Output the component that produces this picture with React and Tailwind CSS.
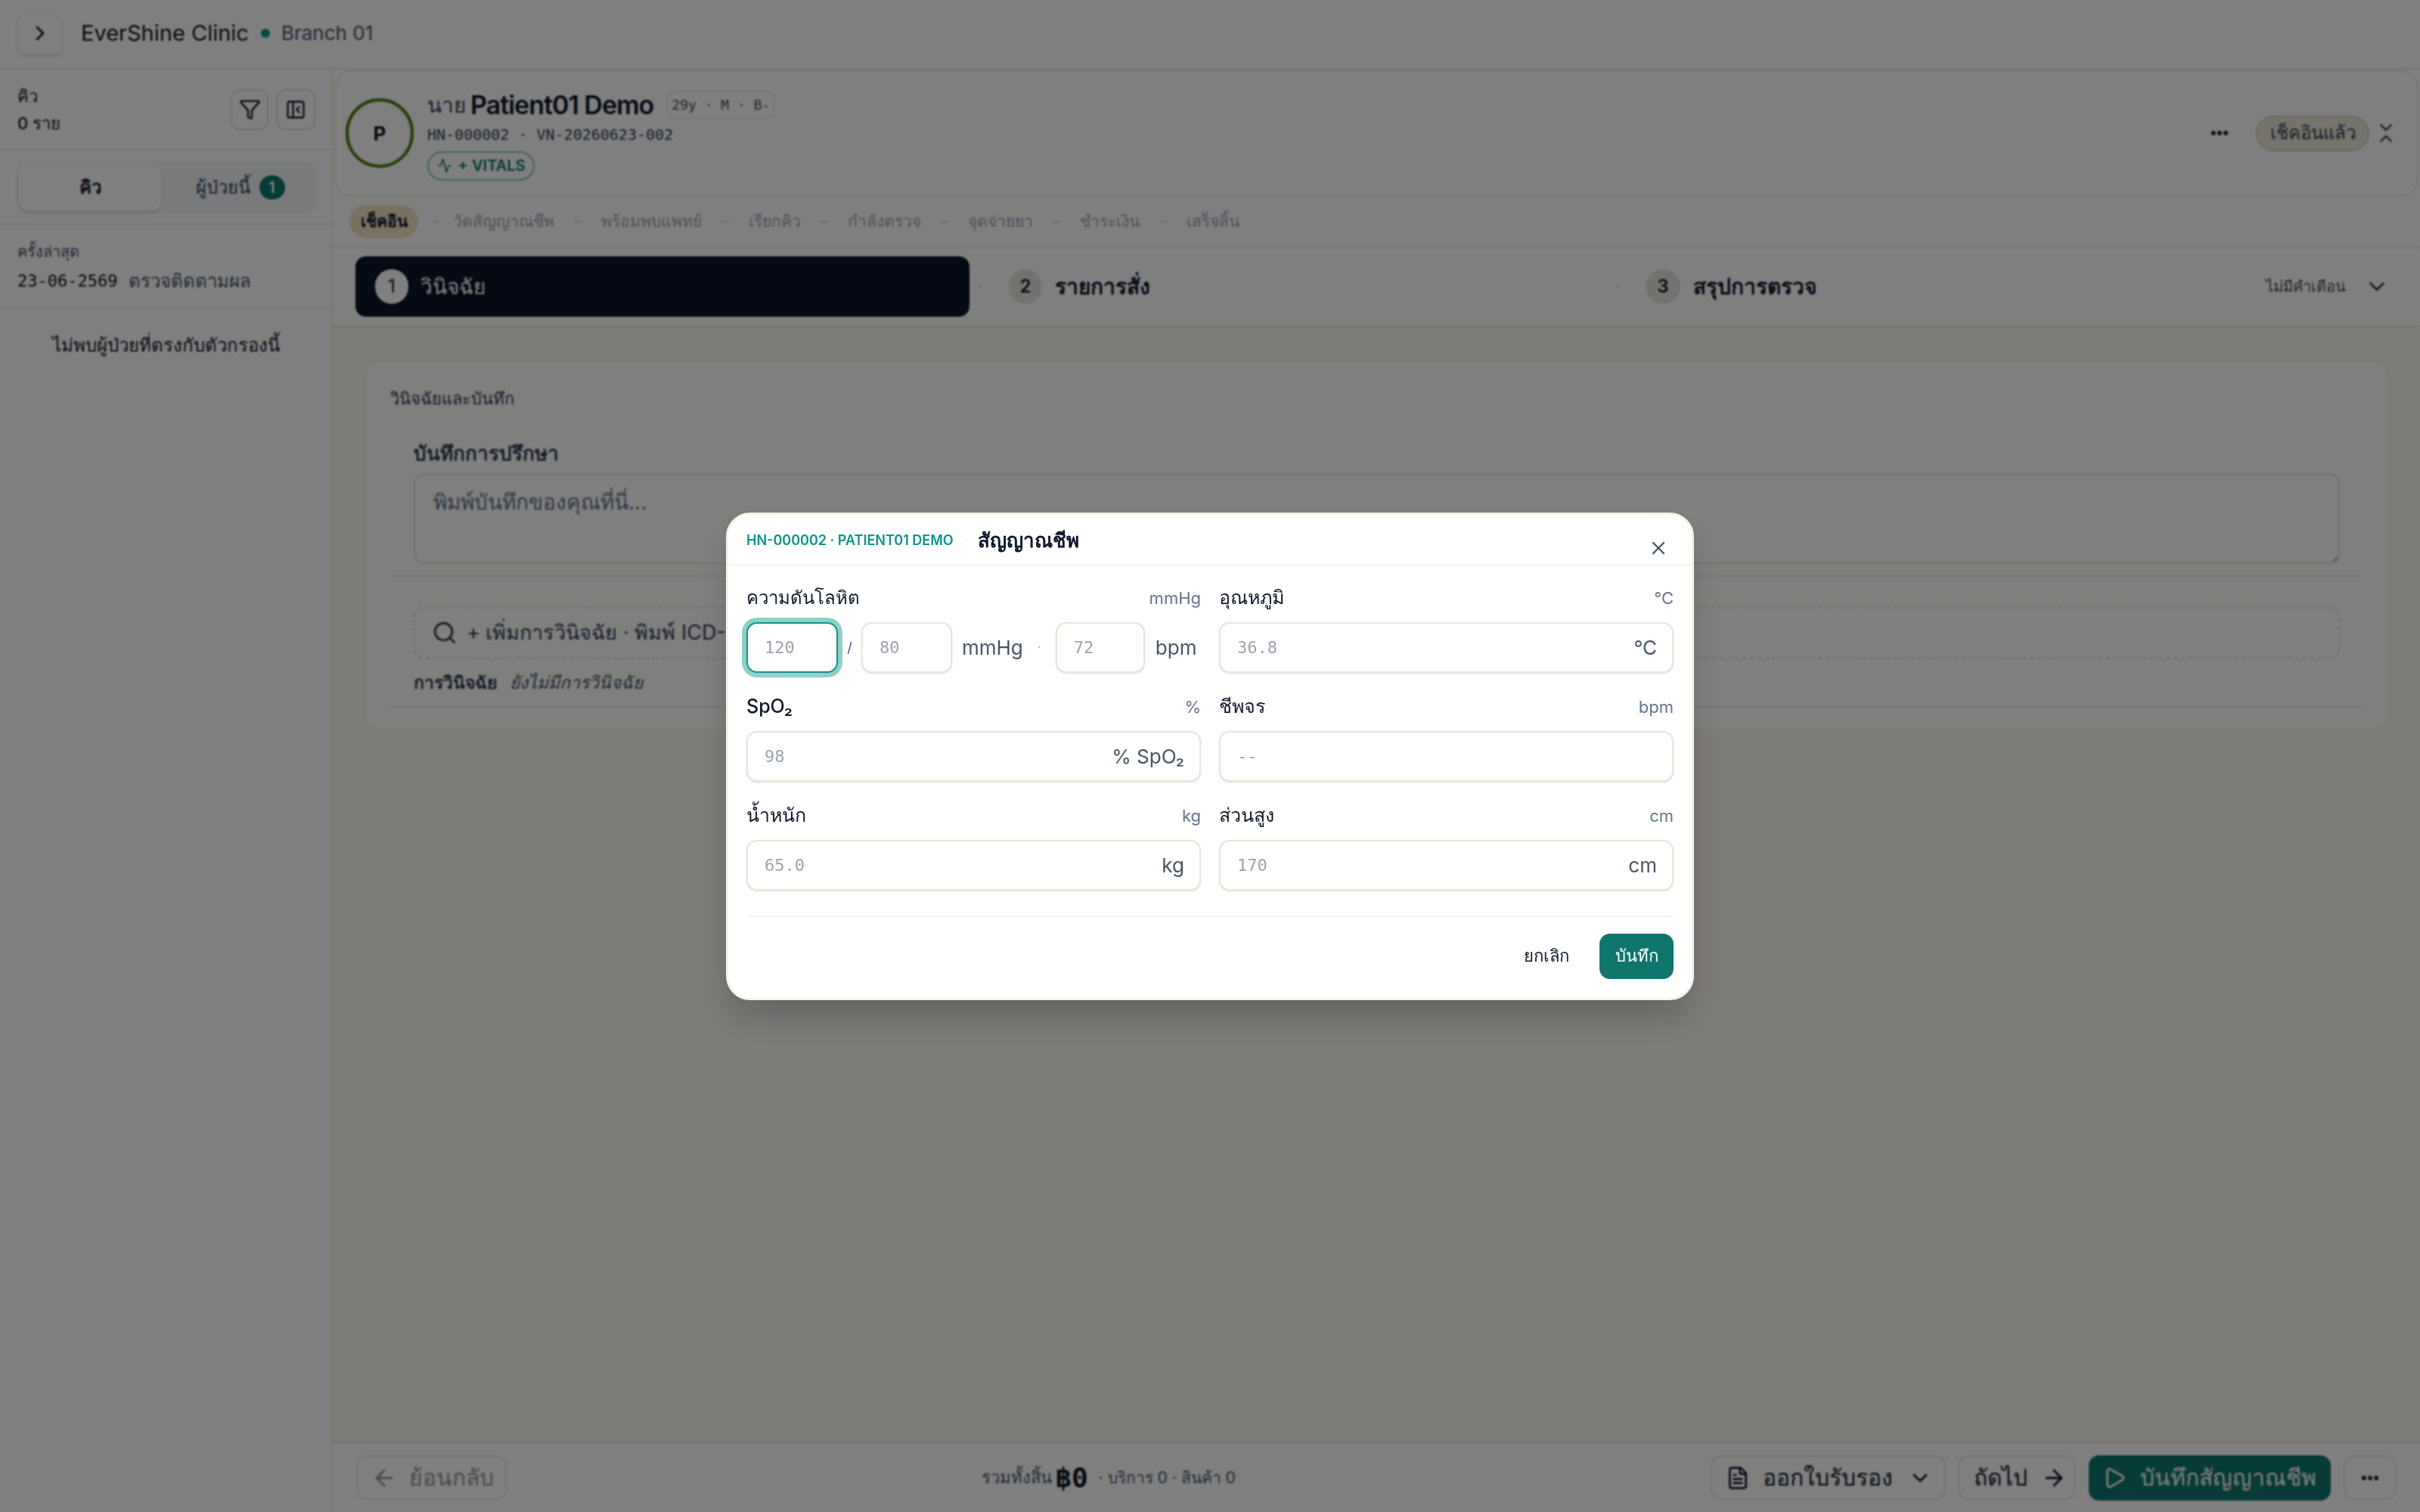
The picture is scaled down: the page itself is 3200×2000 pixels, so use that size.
import React from 'react'
import {
  Activity,
  ArrowLeft,
  ArrowRight,
  ChevronDown,
  ChevronRight,
  ChevronsDownUp,
  Ellipsis,
  FileText,
  Funnel,
  PanelLeftClose,
  Play,
  Search,
  X,
} from 'lucide-react'

const stages = ['วัดสัญญาณชีพ', 'พร้อมพบแพทย์', 'เรียกคิว', 'กำลังตรวจ', 'จุดจ่ายยา', 'ชำระเงิน', 'เสร็จสิ้น']

const mono = "font-['DejaVu_Sans_Mono','Liberation_Mono',monospace]"

function Field({ label, unit, placeholder, suffix }) {
  return (
    <div className="flex flex-col">
      <div className="flex h-[33px] items-center justify-between">
        <span className="text-[25px] font-medium text-[#0f172a]">{label}</span>
        <span className="text-[22px] text-[#64748b]">{unit}</span>
      </div>
      <div className="mt-[15px] flex h-[67px] items-center justify-between rounded-[14px] border-2 border-[#ebe5d8] bg-white pl-[22px] pr-[20px] shadow-sm">
        <span className={`${mono} text-[22px] text-[#9ca3af]`}>{placeholder}</span>
        {suffix && <span className="text-[26px] text-[#475569]">{suffix}</span>}
      </div>
    </div>
  )
}

function SmallInput({ value, width, focused }) {
  return (
    <div
      className={`flex h-[67px] shrink-0 items-center rounded-[14px] border-2 bg-white px-[22px] ${width} ${
        focused ? 'border-[#0d9488] shadow-[0_0_0_6px_rgba(13,148,136,0.45)]' : 'border-[#ebe5d8] shadow-sm'
      }`}
    >
      <span className={`${mono} text-[22px] text-[#9ca3af]`}>{value}</span>
    </div>
  )
}

function Sidebar() {
  return (
    <aside className="flex w-[440px] shrink-0 flex-col border-r-2 border-[#eee9dd] bg-white">
      <div className="flex h-[107px] items-center justify-between border-b-2 border-[#eee9dd] pl-[23px] pr-[21px]">
        <div className="flex flex-col gap-[8px] text-[22px] font-medium leading-[28px] text-[#0f172a]">
          <span>คิว</span>
          <span>0 ราย</span>
        </div>
        <div className="flex gap-[10px]">
          <button className="flex h-[54px] w-[50px] items-center justify-center rounded-[12px] border-2 border-[#e6dfd0] text-[#0f172a]">
            <Funnel size={29} strokeWidth={2} />
          </button>
          <button className="flex h-[54px] w-[52px] items-center justify-center rounded-[12px] border-2 border-[#e6dfd0] text-[#0f172a]">
            <PanelLeftClose size={28} strokeWidth={2} />
          </button>
        </div>
      </div>
      <div className="flex h-[99px] items-center border-b-2 border-[#eee9dd] pl-[21px] pr-[19px]">
        <div className="flex h-[69px] w-full items-center rounded-[16px] bg-[#f1f5f9] p-[4px]">
          <div className="flex h-[62px] w-[189px] items-center justify-center rounded-[14px] bg-white text-[24px] font-semibold text-[#0f172a] shadow-md">
            คิว
          </div>
          <div className="flex flex-1 items-center justify-center gap-[12px] pl-[6px] text-[24px] font-medium text-[#334155]">
            <span>ผู้ป่วยนี้</span>
            <span className="flex h-[32px] w-[34px] items-center justify-center rounded-full bg-[#0f766e] text-[20px] font-semibold text-white">
              1
            </span>
          </div>
        </div>
      </div>
      <div className="flex h-[111px] flex-col justify-center gap-[12px] border-b-2 border-[#eee9dd] px-[23px]">
        <span className="text-[20px] leading-[26px] text-[#475569]">ครั้งล่าสุด</span>
        <div className="flex items-center gap-[15px] leading-[28px]">
          <span className={`${mono} text-[22px] text-[#0f172a]`}>23-06-2569</span>
          <span className="text-[24px] text-[#475569]">ตรวจติดตามผล</span>
        </div>
      </div>
      <p className="mt-[30px] text-center text-[24px] font-medium text-[#0f172a]">ไม่พบผู้ป่วยที่ตรงกับตัวกรองนี้</p>
    </aside>
  )
}

function PatientCard() {
  return (
    <div className="ml-[2px] mr-[2px] flex h-[168px] items-center rounded-[24px] border-2 border-[#eee9dd] bg-white pl-[13px] pr-[25px]">
      <div className="flex h-[92px] w-[90px] items-center justify-center rounded-full border-[4px] border-[#4d7c0f]">
        <div className="flex h-full w-full items-center justify-center rounded-full border border-[#d6d3d1] text-[26px] font-bold text-[#0f172a]">
          P
        </div>
      </div>
      <div className="ml-[18px] flex flex-col">
        <div className="mt-[3px] flex items-center">
          <span className="text-[28px] text-[#334155]">นาย</span>
          <span className="ml-[6px] text-[34px] font-semibold leading-[44px] tracking-[-1px] text-[#0f172a]">Patient01 Demo</span>
          <span className={`${mono} ml-[17px] rounded-[12px] border-2 border-[#eee9dd] px-[5px] py-[3px] text-[18px] text-[#475569]`}>
            29y · M · B-
          </span>
        </div>
        <div className={`${mono} mt-[2px] text-[20px] leading-[30px] text-[#334155]`}>HN-000002 · VN-20260623-002</div>
        <div className="mt-[7px] flex h-[39px] w-[142px] items-center justify-center gap-[8px] rounded-full border-2 border-[#7fbfb8] text-[20px] font-semibold text-[#0f766e]">
          <Activity size={20} strokeWidth={2} />
          <span>+ VITALS</span>
        </div>
      </div>
      <div className="ml-auto flex items-center">
        <Ellipsis size={28} strokeWidth={3} className="text-[#0f172a]" />
        <span className="ml-[34px] flex h-[47px] w-[150px] items-center justify-center rounded-full border-2 border-[#d5d0c2] bg-[#eae6d8] text-[24px] text-[#334155]">
          เช็คอินแล้ว
        </span>
        <ChevronsDownUp size={32} strokeWidth={1.75} className="ml-[6px] text-[#334155]" />
      </div>
    </div>
  )
}

function StageBar() {
  return (
    <div className="flex h-[68px] items-center border-b-2 border-[#eee9dd] bg-white pl-[22px] text-[21px]">
      <span className="flex h-[44px] w-[91px] items-center justify-center rounded-full bg-[#f3e2c4] font-bold text-[#0f172a]">
        เช็คอิน
      </span>
      {stages.map((s, i) => (
        <React.Fragment key={s}>
          <span className={`text-center text-[#cbd5e1] ${i === 0 ? 'w-[46px]' : 'w-[62px]'}`}>–</span>
          <span className="text-[#94a3b8]">{s}</span>
        </React.Fragment>
      ))}
    </div>
  )
}

function StepRow() {
  return (
    <div className="flex h-[104px] items-center border-b-2 border-[#eee9dd] bg-white pl-[30px] pr-[40px]">
      <div className="flex h-[80px] w-[812px] items-center gap-[16px] rounded-[14px] bg-[#0a1428] pl-[26px] text-[28px] font-medium text-white">
        <span className="flex h-[46px] w-[44px] items-center justify-center rounded-full bg-white text-[24px] font-normal text-[#0a1428]">1</span>
        <span>วินิจฉัย</span>
      </div>
      <ChevronRight size={8} className="mx-[11px] text-[#64748b]" />
      <div className="flex h-[80px] w-[812px] items-center gap-[17px] pl-[22px] text-[28px] font-semibold text-[#0f172a]">
        <span className="flex h-[46px] w-[44px] items-center justify-center rounded-full bg-[#e7e5df] text-[24px]">2</span>
        <span>รายการสั่ง</span>
      </div>
      <ChevronRight size={8} className="mx-[11px] text-[#64748b]" />
      <div className="flex h-[80px] flex-1 items-center gap-[17px] pl-[22px] text-[28px] font-semibold text-[#0f172a]">
        <span className="flex h-[46px] w-[46px] items-center justify-center rounded-full bg-[#e7e5df] text-[24px]">3</span>
        <span>สรุปการตรวจ</span>
      </div>
      <span className="text-[20px] text-[#475569]">ไม่มีคำเตือน</span>
      <ChevronDown size={34} strokeWidth={2} className="ml-[24px] text-[#334155]" />
    </div>
  )
}

function DiagnosisCard() {
  return (
    <div className="ml-[46px] mr-[45px] mt-[48px] flex h-[485px] flex-col rounded-[16px] bg-[#fefefd] px-[30px] pt-[31px]">
      <h3 className="text-[22px] font-medium leading-[32px] text-[#334155]">วินิจฉัยและบันทึก</h3>
      <div className="mt-[39px] px-[31px]">
        <div className="text-[26px] font-semibold leading-[36px] text-[#334155]">บันทึกการปรึกษา</div>
        <textarea
          readOnly
          placeholder="พิมพ์บันทึกของคุณที่นี่..."
          className="mt-[8px] block h-[120px] w-full resize-y rounded-[14px] border-2 border-[#e8e2d4] px-[24px] py-[14px] text-[28px] leading-[44px] outline-none placeholder:text-[#64748b]"
        />
      </div>
      <div className="mt-[15px] h-[2px] bg-[#eee9dd]" />
      <div className="mt-[39px] px-[31px]">
        <div className="flex h-[70px] items-center gap-[12px] rounded-[14px] border-2 border-dashed border-[#d9dfe8] pl-[22px] text-[27px] text-[#334155]">
          <Search size={34} strokeWidth={2} />
          <span>+ เพิ่มการวินิจฉัย · พิมพ์ ICD-10</span>
        </div>
        <div className="mt-[14px] flex h-[34px] items-center gap-[17px] text-[23px]">
          <span className="font-bold text-[#334155]">การวินิจฉัย</span>
          <span className="italic text-[#475569]">ยังไม่มีการวินิจฉัย</span>
        </div>
      </div>
      <div className="mt-[14px] h-[2px] bg-[#eee9dd]" />
    </div>
  )
}

function FooterBar() {
  return (
    <div className="flex h-[93px] items-center justify-between border-t-2 border-[#e8e2d4] bg-white pl-[31px] pr-[31px]">
      <button className="flex h-[59px] w-[199px] items-center gap-[16px] rounded-[14px] border-2 border-[#e7e7e7] pl-[18px] text-[30px] font-medium text-[#94979c]">
        <ArrowLeft size={34} strokeWidth={2} />
        <span>ย้อนกลับ</span>
      </button>
      <div className="flex items-center text-[21px] text-[#475569]">
        <span className="text-[22px]">รวมทั้งสิ้น</span>
        <span className={`${mono} ml-[4px] text-[36px] font-bold leading-[40px] text-[#0f172a]`}>฿0</span>
        <span className="ml-[14px]">· บริการ 0 · สินค้า 0</span>
      </div>
      <div className="flex items-center">
        <button className="flex h-[59px] w-[311px] items-center rounded-[14px] border-2 border-[#e2e5ea] pl-[18px] text-[30px] font-medium text-[#0f172a]">
          <FileText size={32} strokeWidth={2} />
          <span className="ml-[17px]">ออกใบรับรอง</span>
          <ChevronDown size={32} strokeWidth={2} className="ml-[20px]" />
        </button>
        <button className="ml-[16px] flex h-[59px] w-[156px] items-center rounded-[14px] border-2 border-[#e2e5ea] pl-[19px] text-[30px] font-medium text-[#0f172a]">
          <span>ถัดไป</span>
          <ArrowRight size={34} strokeWidth={2} className="ml-[18px]" />
        </button>
        <button className="ml-[17px] flex h-[60px] w-[320px] items-center rounded-[14px] bg-[#0f766e] pl-[18px] text-[30px] font-medium text-white">
          <Play size={32} strokeWidth={2} />
          <span className="ml-[18px]">บันทึกสัญญาณชีพ</span>
        </button>
        <button className="ml-[17px] flex h-[59px] w-[70px] items-center justify-center rounded-[14px] border-2 border-[#e2e5ea] text-[#0f172a]">
          <Ellipsis size={28} strokeWidth={3} />
        </button>
      </div>
    </div>
  )
}

function VitalsModal() {
  return (
    <div className="fixed inset-0 flex items-center justify-center bg-black/50 backdrop-blur-[1px]">
      <div className="w-[1280px] rounded-[32px] border-[3px] border-[#f6f2e9] bg-white shadow-2xl">
        <div className="relative flex h-[67px] items-center border-b-2 border-[#f6f2e9] pl-[24px] pt-[3px]">
          <span className="text-[18px] font-semibold text-[#0d9488]">HN-000002 · PATIENT01 DEMO</span>
          <span className="mx-[14px] text-[14px] text-[#cbd5e1]">·</span>
          <span className="text-[26px] font-semibold text-[#0f172a]">สัญญาณชีพ</span>
          <X size={28} strokeWidth={2} className="absolute right-[30px] top-[30px] text-[#475569]" />
        </div>
        <div className="grid grid-cols-2 gap-x-[24px] gap-y-[29px] px-[24px] pt-[27px]">
          <div className="flex flex-col">
            <div className="flex h-[33px] items-center justify-between">
              <span className="text-[24px] font-medium text-[#0f172a]">ความดันโลหิต</span>
              <span className="text-[22px] text-[#64748b]">mmHg</span>
            </div>
            <div className="mt-[15px] flex items-center">
              <SmallInput value="120" width="w-[121px]" focused />
              <span className="w-[31px] text-center text-[18px] text-[#475569]">/</span>
              <SmallInput value="80" width="w-[120px]" />
              <span className="ml-[13px] text-[26px] text-[#475569]">mmHg</span>
              <span className="w-[43px] text-center text-[16px] text-[#94a3b8]">·</span>
              <SmallInput value="72" width="w-[118px]" />
              <span className="ml-[14px] text-[26px] text-[#475569]">bpm</span>
            </div>
          </div>
          <Field label="อุณหภูมิ" unit="°C" placeholder="36.8" suffix="°C" />
          <Field label="SpO₂" unit="%" placeholder="98" suffix="% SpO₂" />
          <Field label="ชีพจร" unit="bpm" placeholder="--" />
          <Field label="น้ำหนัก" unit="kg" placeholder="65.0" suffix="kg" />
          <Field label="ส่วนสูง" unit="cm" placeholder="170" suffix="cm" />
        </div>
        <div className="mx-[24px] mt-[33px] h-[2px] bg-[#f6f2e9]" />
        <div className="flex items-center justify-end px-[24px] pb-[25px] pt-[22px]">
          <span className="mr-[40px] text-[22px] font-medium text-[#0f172a]">ยกเลิก</span>
          <button className="h-[60px] w-[98px] rounded-[14px] bg-[#0f766e] text-[22px] font-medium text-white">บันทึก</button>
        </div>
      </div>
    </div>
  )
}

export default function App() {
  return (
    <div className="flex h-screen w-screen flex-col overflow-hidden bg-white font-['Inter','Noto_Sans',sans-serif]">
      <header className="flex h-[92px] shrink-0 items-center border-b-2 border-[#eee9dd] bg-white pb-[3px] pl-[23px]">
        <button className="flex h-[56px] w-[59px] items-center justify-center rounded-[12px] border border-[#f1eee6] text-[#0f172a] shadow-md">
          <ChevronRight size={32} strokeWidth={2} />
        </button>
        <span className="ml-[25px] text-[29px] font-normal text-[#0f172a]">EverShine Clinic</span>
        <span className="ml-[16px] h-[12px] w-[12px] rounded-full bg-[#0d9488]" />
        <span className="ml-[15px] text-[26px] text-[#475569]">Branch 01</span>
      </header>
      <div className="flex min-h-0 flex-1">
        <Sidebar />
        <main className="flex min-w-0 flex-1 flex-col bg-white">
          <PatientCard />
          <StageBar />
          <StepRow />
          <div className="min-h-0 flex-1 bg-[#f9f7f1]">
            <DiagnosisCard />
          </div>
          <FooterBar />
        </main>
      </div>
      <VitalsModal />
    </div>
  )
}
